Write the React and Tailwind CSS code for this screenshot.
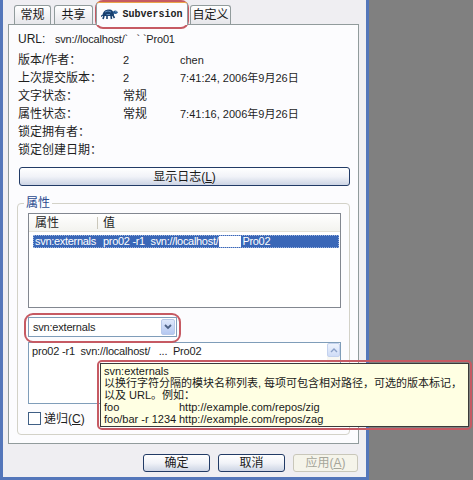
import React from 'react';

const sans = "font-['Liberation_Sans','Noto_Sans_CJK_SC',sans-serif]";

function Turtle() {
  return (
    <svg width="17" height="12" viewBox="0 0 17 12">
      <path d="M1.5 8 C1.5 3.5 4.5 1.5 8 1.5 C11 1.5 13 3.5 13 7 L12.5 8 Z" fill="#18406f" />
      <path d="M4 4 L7 3 L10 4 M5.5 6.5 L9 6.5" stroke="#6f9acb" strokeWidth="0.8" fill="none" />
      <ellipse cx="14.3" cy="4.2" rx="2.3" ry="1.8" fill="#1f5590" />
      <circle cx="15" cy="3.7" r="0.5" fill="#ffffff" />
      <path d="M3 8 L2 11 M6 8 L6 11 M10 8 L10.5 11 M12 7.5 L13.5 10" stroke="#18406f" strokeWidth="1.6" />
      <path d="M1.8 7 L0 8.5" stroke="#18406f" strokeWidth="1.2" />
    </svg>
  );
}

function Tab({ children, className }) {
  return (
    <div
      className={`shrink-0 h-[19px] flex items-center justify-center border border-b-0 border-[#919b9c] rounded-t-[3px] bg-gradient-to-b from-white to-[#e6e6ea] text-[12px] text-[#1a1a1a] ${className}`}
    >
      {children}
    </div>
  );
}

function Row({ label, v1, v2 }) {
  return (
    <div className="shrink-0 flex h-[18px] items-center text-[12px] text-[#1e1e1e]">
      <span className="w-[105px]">{label}</span>
      <span className="w-[57px] text-[11px]">{v1}</span>
      <span className="text-[11px]">{v2}</span>
    </div>
  );
}

function XpButton({ children, disabled, className }) {
  return (
    <div
      className={`shrink-0 flex items-center justify-center rounded-[3px] text-[12px] ${
        disabled
          ? 'border border-[#c9c7ba] bg-[#f5f4ea] text-[#a5a59a]'
          : 'border border-[#223b66] bg-gradient-to-b from-white via-[#f1f3f8] to-[#cdd5e5] text-[#1a1a1a]'
      } ${className}`}
    >
      {children}
    </div>
  );
}

export default function App() {
  return (
    <div className={`relative w-[473px] h-[480px] bg-[#808080] flex items-start ${sans}`}>
      <div className="shrink-0 w-[369px] h-[480px] bg-[#efeef2] border-x-[3px] border-b-[3px] border-[#5476ba] flex flex-col">
        {/* tabs */}
        <div className="shrink-0 flex items-end h-[24px] pl-[11px]">
          <Tab className="w-[37px]">常规</Tab>
          <Tab className="w-[39px] ml-[3px]">共享</Tab>
          <div className="shrink-0 relative z-10 -mb-px ml-[3px] w-[92px] h-[23px] flex items-center justify-center gap-[4px] border border-b-0 border-[#919b9c] border-t-[#e9a54a] rounded-t-[3px] bg-[#fcfcfe]">
            <Turtle />
            <span className="font-['Liberation_Mono',monospace] text-[10px] font-bold text-[#222]">Subversion</span>
          </div>
          <Tab className="w-[41px] ml-[2px]">自定义</Tab>
        </div>

        {/* panel */}
        <div className="shrink-0 ml-[5px] w-[351px] h-[420px] border border-[#919b9c] bg-[#fcfcfe] flex flex-col pl-[9px] pt-[5px]">
          <div className="shrink-0 flex h-[18px] items-center text-[12px] text-[#1e1e1e]">
            <span className="w-[37px] text-[12px]">URL:</span>
            <span className="text-[11px] tracking-[-0.2px]">svn://localhost/`&nbsp;&nbsp;&nbsp;`&nbsp;`Pro01</span>
          </div>
          <div className="shrink-0 mt-[3px] flex flex-col">
            <Row label="版本/作者：" v1="2" v2="chen" />
            <Row label="上次提交版本：" v1="2" v2="7:41:24, 2006年9月26日" />
            <Row label="文字状态：" v1={<span className="text-[12px]">常规</span>} />
            <Row label="属性状态：" v1={<span className="text-[12px]">常规</span>} v2="7:41:16, 2006年9月26日" />
            <Row label="锁定拥有者：" />
            <Row label="锁定创建日期：" />
          </div>

          <XpButton className="mt-[8px] ml-[1px] w-[331px] h-[19px]">
            显示日志(<span className="underline">L</span>)
          </XpButton>

          {/* group box */}
          <div className="shrink-0 relative mt-[17px] -ml-px w-[333px] h-[232px] border border-[#d3d2c8] rounded-[4px] flex flex-col pl-[10px] pt-[9px]">
            <span className="absolute -top-[8px] left-[6px] px-[2px] bg-[#fcfcfe] text-[12px] text-[#2b4a8f] leading-[14px]">属性</span>

            {/* list view */}
            <div className="shrink-0 w-[313px] h-[95px] border border-[#828790] bg-white flex flex-col">
              <div className="shrink-0 h-[18px] flex items-center text-[12px] text-[#1e1e1e] bg-gradient-to-b from-white to-[#f3f3ef] border-b border-[#e2e0d6]">
                <span className="w-[68px] pl-[6px]">属性</span>
                <span className="w-px h-[12px] bg-[#cbc8bb]" />
                <span className="pl-[5px]">值</span>
              </div>
              <div className="shrink-0 mt-[3px] ml-[4px] mr-[1px] h-[13px] flex items-center bg-[#3a67b7] border border-dotted border-[#9db3dd] text-[11px] tracking-[-0.3px] text-white whitespace-nowrap overflow-hidden">
                <span className="w-[69px] pl-[1px]">svn:externals</span>
                <span>pro02 -r1&nbsp;&nbsp;svn://localhost/</span>
                <span className="w-[22px] h-[11px] bg-white mx-[1px]" />
                <span>Pro02</span>
              </div>
            </div>

            {/* combo */}
            <div className="shrink-0 mt-[9px] w-[149px] h-[20px] border border-[#7f9db9] bg-white flex items-center">
              <span className="flex-1 pl-[4px] text-[11px] tracking-[-0.2px] text-[#1e1e1e]">svn:externals</span>
              <div className="w-[14px] h-[16px] mr-[1px] rounded-[2px] bg-gradient-to-b from-[#dfe8fb] to-[#b5c8f1] border border-[#b8c9ea] flex items-center justify-center">
                <svg width="8" height="6" viewBox="0 0 8 6">
                  <path d="M1 1 L4 4 L7 1" stroke="#4d6185" strokeWidth="1.8" fill="none" />
                </svg>
              </div>
            </div>

            {/* text area */}
            <div className="shrink-0 mt-[5px] w-[313px] h-[62px] border border-[#7f9db9] bg-white flex">
              <span className="flex-1 pl-[3px] pt-[1px] text-[11px] tracking-[-0.2px] text-[#1e1e1e] leading-[14px]">
                pro02 -r1&nbsp;&nbsp;svn://localhost/&nbsp;&nbsp;&nbsp;...&nbsp;&nbsp;Pro02
              </span>
              <div className="w-[13px] flex flex-col bg-[#f7f7f3]">
                <div className="h-[14px] rounded-[2px] bg-gradient-to-b from-[#eef3fd] to-[#cfdcf7] border border-[#c4d2ee] flex items-center justify-center">
                  <svg width="8" height="5" viewBox="0 0 8 5">
                    <path d="M1 4 L4 1 L7 4" stroke="#8aa0c8" strokeWidth="1.4" fill="none" />
                  </svg>
                </div>
              </div>
            </div>

            {/* checkbox */}
            <div className="shrink-0 mt-[8px] h-[13px] flex items-center gap-[3px]">
              <span className="w-[13px] h-[13px] border border-[#3f5f85] bg-white" />
              <span className="text-[12px] text-[#1e1e1e]">递归(<span className="underline">C</span>)</span>
            </div>
          </div>
        </div>

        {/* bottom buttons */}
        <div className="shrink-0 mt-[10px] flex justify-end gap-[8px] pr-[8px]">
          <XpButton className="w-[67px] h-[18px]">确定</XpButton>
          <XpButton className="w-[67px] h-[18px]">取消</XpButton>
          <XpButton disabled className="w-[65px] h-[18px]">应用(<span className="underline">A</span>)</XpButton>
        </div>
      </div>

      {/* annotation rings */}
      <div className="absolute left-[95px] top-0 w-[94px] h-[29px] rounded-[8px] border-2 border-[#c65a63] pointer-events-none" />
      <div className="absolute left-[24px] top-[313px] w-[157px] h-[30px] rounded-[9px] border-2 border-[#c65a63] pointer-events-none" />

      {/* tooltip */}
      <div className="absolute left-[97px] top-[360px] w-[375px] h-[70px] rounded-[5px] border-2 border-[#c65a63] p-px">
        <div className="w-full h-full border border-[#3a3a3a] bg-[#ffffe3] pl-[3px] pt-px text-[11px] leading-[12px] text-[#1a1a1a] whitespace-nowrap">
          <div>svn:externals</div>
          <div>以换行字符分隔的模块名称列表, 每项可包含相对路径，可选的版本标记，</div>
          <div>以及 URL。例如：</div>
          <div className="flex"><span className="w-[75px]">foo</span><span>http://example.com/repos/zig</span></div>
          <div className="flex"><span className="w-[75px]">foo/bar -r 1234</span><span>http://example.com/repos/zag</span></div>
        </div>
      </div>
    </div>
  );
}
